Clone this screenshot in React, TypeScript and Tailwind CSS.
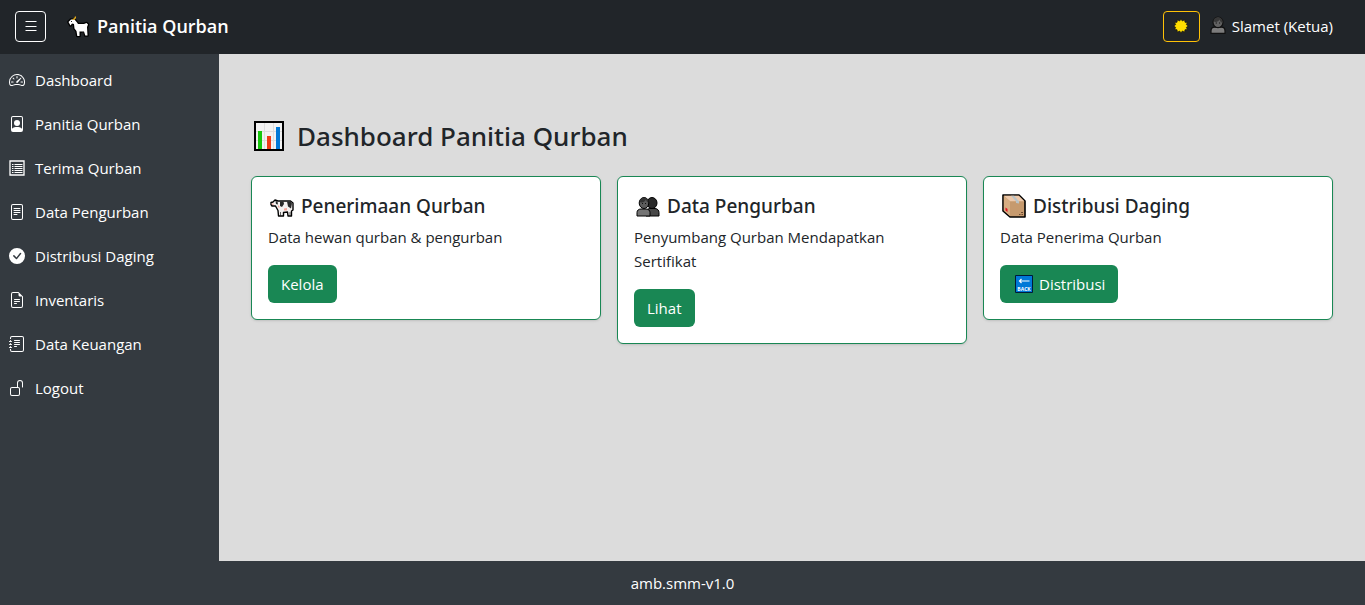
import { useState } from 'react';
import type { ReactNode } from 'react';
import {
  BsCheckCircleFill,
  BsFileEarmarkText,
  BsFilePerson,
  BsFileText,
  BsJournalText,
  BsSpeedometer2,
  BsUnlock,
} from 'react-icons/bs';

function ListIcon() {
  return (
    <svg className="w-4 h-4" viewBox="0 0 16 16" fill="none" stroke="currentColor">
      <path d="M1 1h14v14H1z" strokeWidth="1.300" />
      <path d="M3 4.500h1.500M3 6.500h1.500M3 8.500h1.500M3 10.500h1.500M3 12.500h1.500M5.500 4.500h8M5.500 6.500h8M5.500 8.500h8M5.500 10.500h8M5.500 12.500h8" />
    </svg>
  );
}

function GoatIcon() {
  return (
    <svg className="w-6 h-6" viewBox="0 0 24 24" strokeLinejoin="round">
      <path
        d="M2.500 8 5 5.500h3.500L11 8.500l1 1.500h6l2.500-1L22 10.500l-1 2.500.5 8.500h-2.200L18 17.500h-4.500v4.500h-2.200L10.500 17l-2-2.500L8 10l-2-.5-1.500 2z"
        fill="#fff"
        stroke="#000"
        strokeWidth="2.600"
      />
      <path d="M2.500 8 5 5.500h3.500L11 8.500l1 1.500h6l2.500-1L22 10.500l-1 2.500.5 8.500h-2.200L18 17.500h-4.500v4.500h-2.200L10.500 17l-2-2.500L8 10l-2-.5-1.500 2z" fill="#fff" />
      <path d="M6.500 5.500c2 0 3-1 3-3" fill="none" stroke="#eeb21c" strokeWidth="1.200" />
      <path d="M17 21v-3M5 7.500h1" stroke="#222" />
    </svg>
  );
}

function SunIcon() {
  return (
    <svg className="w-4 h-4" viewBox="0 0 16 16" strokeLinejoin="round">
      <path
        d="M8 .8 9.300 3 11.600 1.800 12 4.300l2.500.1L13.300 6.600 15.300 8l-2 1.400 1.200 2.200-2.500.1-.4 2.500L9.300 13 8 15.200 6.700 13l-2.300 1.200-.4-2.500-2.500-.1 1.200-2.200L.7 8l2-1.400L1.500 4.400 4 4.300l.4-2.500L6.700 3z"
        fill="#fedd00"
        stroke="#111"
        strokeWidth=".7"
      />
    </svg>
  );
}

function UserIcon() {
  return (
    <svg className="w-4 h-5" viewBox="0 0 16 20">
      <path d="M1 17.300V15c0-2.300 1.500-3.800 3.500-3.800h7c2 0 3.500 1.500 3.500 3.800v2.300z" fill="#7c7c7c" stroke="#111" strokeWidth="1.200" />
      <ellipse cx="8" cy="6.300" rx="5" ry="5.300" fill="#626262" stroke="#111" strokeWidth="1.200" />
      <path d="M3.500 5.500c3 1 5 0 6-2 .5 2 1.500 3 3 3.200C13 3.500 11 1.500 8 1.500S3.500 3 3.500 5.500z" fill="#383838" />
      <path d="M5.700 7h1.200M9 7h1.200" stroke="#111" />
    </svg>
  );
}

function ChartIcon() {
  return (
    <svg className="w-8 h-8" viewBox="0 0 32 32">
      <path d="M2 2h28v28H2z" fill="#f2f2f2" stroke="#000" strokeWidth="2" />
      <path d="M11.500 3v26M20.500 3v26M3 11.500h26M3 20.500h26" stroke="#ddd" />
      <path d="M5 11h4v18H5z" fill="#16c60c" />
      <path d="M14 16h4v13h-4z" fill="#f03a17" />
      <path d="M23 7h4v22h-4z" fill="#0078d7" />
    </svg>
  );
}

function CowIcon() {
  return (
    <svg className="w-6 h-6" viewBox="0 0 24 24" strokeLinejoin="round">
      <path
        d="M1 8.500 3 8l2-2 3 1h12.500L23 9v7l-1.500 1v5H18l-.5-4-4 .5V22H8.500L8 16.500 5.500 12H2l-1-1.500z"
        fill="#f4f1f0"
        stroke="#000"
        strokeWidth="1.400"
      />
      <path d="M10 7.500h3.500L14 10l-2 3-2-1zM17 7.500h3.500l1.500 2-1 5-3-2zM5.500 7l2 .5.5 3-2-.5z" fill="#292929" />
      <path d="M1.500 9.500h2V11H2zM14 14.500l3-.5v2.500h-3zM8 11l1.500 1.500V14L8 13z" fill="#f3a69c" />
      <path d="M10.500 18v4M20 18v4" stroke="#222" strokeWidth=".7" />
    </svg>
  );
}

function PeopleIcon() {
  return (
    <svg className="w-6 h-6" viewBox="0 0 24 24" stroke="#000">
      <path d="M10 22v-4c0-2 2-3.500 4-3.500h5c2.500 0 4 2 4 4V22z" fill="#484848" />
      <ellipse cx="16" cy="9" rx="5" ry="5.500" fill="#292929" />
      <path d="M1 22v-3.500C1 16.500 2.500 15 5 15h5c2.500 0 4 1.500 4 3.500V22z" fill="#747474" />
      <ellipse cx="8" cy="9" rx="4.800" ry="5.500" fill="#5c5c5c" />
      <path d="M3.500 8c3 1 5 0 6.500-2.500.5 2 1.500 3 2.500 3C13 5 10.500 3.500 8 3.500S4 5 3.500 8z" fill="#333" stroke="none" />
      <path d="M6 9.500h1M9 9.500h1" stroke="#111" />
    </svg>
  );
}

function BoxIcon() {
  return (
    <svg className="w-6 h-6" viewBox="0 0 24 24" strokeLinejoin="round">
      <path d="M1 1h16l6 6v16H8l-7-6z" fill="#c69a6e" stroke="#000" strokeWidth="1.600" />
      <path d="M1.800 1.800h15l5.500 5.400H8z" fill="#edc9ab" />
      <path d="M1.800 1.800 8 7.200V22l-6.200-5.500z" fill="#d7ad82" />
      <path d="M9 1.800h3l5 5.400v2.300l-3-.5V7.200z" fill="#b9c3c7" />
      <path d="M3.500 13.500l2 1.500v3l-2-1.500z" fill="#e81224" />
      <path d="M17 20.500h1.500M19.500 20.500H21M19 18.500h2" stroke="#6d4b32" />
    </svg>
  );
}

function BackIcon() {
  return (
    <svg className="w-5 h-5" viewBox="0 0 20 20">
      <path d="M2.500 1.500h17v17h-17z" fill="#0078d7" stroke="#001b38" />
      <path d="M16.500 7h-10M8.500 5l-2 2 2 2" fill="none" stroke="#fff" strokeWidth="1.200" />
      <text x="11" y="16.500" textAnchor="middle" fontSize="5" fontWeight="700" fill="#fff">BACK</text>
    </svg>
  );
}

const menu = [
  { label: 'Dashboard', href: '#dashboard', icon: <BsSpeedometer2 /> },
  { label: 'Panitia Qurban', href: '#panitia', icon: <BsFilePerson /> },
  { label: 'Terima Qurban', href: '#terima', icon: <ListIcon /> },
  { label: 'Data Pengurban', href: '#pengurban', icon: <BsFileText /> },
  { label: 'Distribusi Daging', href: '#distribusi', icon: <BsCheckCircleFill /> },
  { label: 'Inventaris', href: '#inventaris', icon: <BsFileEarmarkText /> },
  { label: 'Data Keuangan', href: '#keuangan', icon: <BsJournalText /> },
  { label: 'Logout', href: '#logout', icon: <BsUnlock /> },
];

type CardProps = {
  icon: ReactNode;
  title: string;
  text: string;
  href: string;
  action: ReactNode;
};

function Card({ icon, title, text, href, action }: CardProps) {
  return (
    <div className="rounded-md border border-[#198754] bg-white p-4 shadow-sm">
      <h2 className="mb-1.5 flex items-center gap-[7px] pl-0.5 font-['Noto_Sans',sans-serif] text-[19px] leading-[26px] font-medium">
        {icon}
        {title}
      </h2>
      <p className="mb-4 leading-6">{text}</p>
      <a href={href} className="inline-flex h-[38px] items-center gap-1.5 rounded-md bg-[#198754] px-[13px] text-white hover:bg-[#157347]">
        {action}
      </a>
    </div>
  );
}

export default function App() {
  const [open, setOpen] = useState(true);

  return (
    <div className="flex min-h-screen flex-col bg-[#dcdcdc] font-['Open_Sans',sans-serif] text-[15px] text-[#212529]">
      <header className="flex h-[54px] items-center justify-between bg-[#212529] pr-8 pb-0.5 pl-[15px] text-white">
        <div className="flex items-center">
          <button
            onClick={() => setOpen(!open)}
            aria-label="Menu"
            className="flex h-[31px] w-[31px] items-center justify-center rounded border border-white"
          >
            <svg className="w-3 h-3" viewBox="0 0 12 12" stroke="currentColor">
              <path d="M.5 1.500h11M.5 6.500h11M.5 10.500h11" />
            </svg>
          </button>
          <a href="#dashboard" className="ml-5 flex items-center gap-[7px] text-lg font-semibold">
            <GoatIcon />
            Panitia Qurban
          </a>
        </div>
        <div className="flex items-center gap-2.5">
          <button aria-label="Tema" className="flex h-[31px] w-[37px] items-center justify-center rounded border border-[#ffc107]">
            <SunIcon />
          </button>
          <span className="flex items-center gap-1.5">
            <UserIcon />
            Slamet (Ketua)
          </span>
        </div>
      </header>

      <div className="flex flex-1">
        {open && (
          <nav className="w-[219px] shrink-0 bg-[#343a40] pt-1 text-white">
            {menu.map((item) => (
              <a key={item.label} href={item.href} className="flex h-11 items-center gap-2.5 pl-[9px] hover:bg-[#495057]">
                <span className="text-base">{item.icon}</span>
                {item.label}
              </a>
            ))}
          </nav>
        )}

        <main className="flex-1 px-8 pt-16">
          <h1 className="mb-[22px] flex items-center gap-3 pl-0.5 font-['Noto_Sans',sans-serif] text-[26px] leading-9 font-medium">
            <ChartIcon />
            Dashboard Panitia Qurban
          </h1>
          <div className="grid items-start gap-4 md:grid-cols-3">
            <Card icon={<CowIcon />} title="Penerimaan Qurban" text="Data hewan qurban & pengurban" href="#terima" action="Kelola" />
            <Card icon={<PeopleIcon />} title="Data Pengurban" text="Penyumbang Qurban Mendapatkan Sertifikat" href="#pengurban" action="Lihat" />
            <Card
              icon={<BoxIcon />}
              title="Distribusi Daging"
              text="Data Penerima Qurban"
              href="#distribusi"
              action={
                <>
                  <BackIcon />
                  Distribusi
                </>
              }
            />
          </div>
        </main>
      </div>

      <footer className="flex h-11 items-center justify-center bg-[#343a40] text-white">amb.smm-v1.0</footer>
    </div>
  );
}
